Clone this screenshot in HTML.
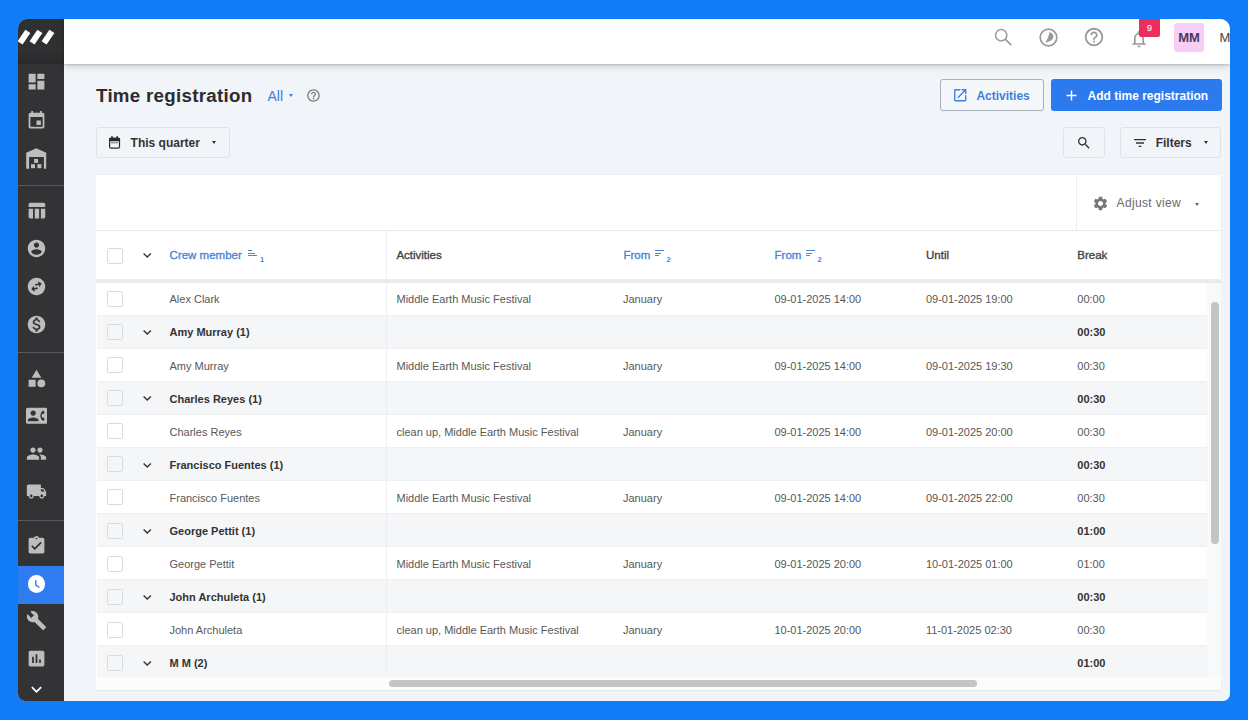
<!DOCTYPE html>
<html><head><meta charset="utf-8">
<style>
html,body{margin:0;padding:0;}
body{width:1248px;height:720px;overflow:hidden;background:#107cf6;font-family:"Liberation Sans",sans-serif;position:relative;}
.win{position:absolute;left:18px;top:18.5px;width:1212px;height:682px;border-radius:10px 10px 7px 7px;overflow:hidden;background:#f1f4f8;}
.in{position:absolute;left:-18px;top:-18.5px;width:1248px;height:720px;}
.a{position:absolute;}
.t{position:absolute;white-space:nowrap;}
</style></head><body>
<div class="win"><div class="in">
<div class="a" style="left:18px;top:18px;width:46px;height:683px;background:#333335;"></div>
<div class="a" style="left:18px;top:18px;width:46px;height:46px;background:linear-gradient(#303032 0%,#303032 70%,#29292b 100%);"></div>
<div class="a" style="left:21.30px;top:30.30px;width:5.6px;height:14px;background:#fff;transform:rotate(34deg);"></div>
<div class="a" style="left:33.10px;top:30.30px;width:5.6px;height:14px;background:#fff;transform:rotate(34deg);"></div>
<div class="a" style="left:44.90px;top:30.30px;width:5.6px;height:14px;background:#fff;transform:rotate(34deg);"></div>
<div class="a" style="left:18px;top:185px;width:46px;height:1px;background:#58585a;"></div>
<div class="a" style="left:18px;top:352px;width:46px;height:1px;background:#58585a;"></div>
<div class="a" style="left:18px;top:520px;width:46px;height:1px;background:#58585a;"></div>
<div class="a" style="left:18px;top:566px;width:46px;height:38px;background:#2f7cf0;"></div>
<svg class="a" style="left:26.00px;top:70.75px;" width="21" height="21" viewBox="0 0 24 24"><path fill="#bdbdbd" d="M3 13h8V3H3v10zm0 8h8v-6H3v6zm10 0h8V11h-8v10zm0-18v6h8V3h-8z"/></svg>
<svg class="a" style="left:26.00px;top:109.50px;" width="21" height="21" viewBox="0 0 24 24"><path fill="#bdbdbd" d="M17 12h-5v5h5v-5zM16 1v2H8V1H6v2H5c-1.11 0-1.99.9-1.99 2L3 19c0 1.1.89 2 2 2h14c1.1 0 2-.9 2-2V5c0-1.1-.9-2-2-2h-1V1h-2zm3 18H5V8h14v11z"/></svg>
<svg class="a" style="left:22px;top:142px" width="30" height="30" viewBox="22 142 30 30"><path fill="#bdbdbd" d="M26.2 168.7V152.8L36.2 148.2L46.2 152.8V168.7H43.9V157H29.1V168.7Z"/><rect fill="#bdbdbd" x="34.1" y="158.9" width="4" height="4"/><rect fill="#bdbdbd" x="31" y="164.2" width="4" height="4"/><rect fill="#bdbdbd" x="37.4" y="164.2" width="4" height="4"/></svg>
<svg class="a" style="left:26.00px;top:200.10px;" width="21" height="21" viewBox="0 0 24 24"><path fill="#bdbdbd" d="M10 10.02h5V21h-5zM17 21h3c1.1 0 2-.9 2-2v-9h-5v11zm3-18H5c-1.1 0-2 .9-2 2v3h19V5c0-1.1-.9-2-2-2zM3 19c0 1.1.9 2 2 2h3V10H3v9z"/></svg>
<svg class="a" style="left:26.00px;top:237.75px;" width="21" height="21" viewBox="0 0 24 24"><path fill="#bdbdbd" d="M12 2C6.48 2 2 6.48 2 12s4.48 10 10 10 10-4.48 10-10S17.52 2 12 2zm0 3c1.66 0 3 1.34 3 3s-1.34 3-3 3-3-1.34-3-3 1.34-3 3-3zm0 14.2c-2.5 0-4.71-1.28-6-3.22.03-1.99 4-3.08 6-3.08 1.99 0 5.97 1.09 6 3.08-1.29 1.94-3.5 3.22-6 3.22z"/></svg>
<svg class="a" style="left:26.00px;top:275.75px;transform:rotate(-12deg);" width="21" height="21" viewBox="0 0 24 24"><path fill="#bdbdbd" d="M22 12c0-5.52-4.48-10-10-10S2 6.48 2 12s4.48 10 10 10 10-4.48 10-10zm-7-5.5l3.5 3.5-3.5 3.5V11h-4V9h4V6.5zm-6 11L5.5 14 9 10.5V13h4v2H9v2.5z"/></svg>
<svg class="a" style="left:26.00px;top:313.50px;" width="21" height="21" viewBox="0 0 24 24"><path fill="#bdbdbd" d="M12 2C6.48 2 2 6.48 2 12s4.48 10 10 10 10-4.48 10-10S17.52 2 12 2zm1.41 16.09V20h-2.67v-1.93c-1.71-.36-3.16-1.46-3.27-3.4h1.96c.1 1.05.82 1.870 2.65 1.87 1.96 0 2.4-.98 2.4-1.59 0-.83-.44-1.61-2.67-2.14-2.48-.6-4.18-1.62-4.18-3.670 0-1.72 1.39-2.84 3.11-3.21V4h2.67v1.95c1.86.45 2.79 1.86 2.85 3.39H14.3c-.05-1.11-.64-1.87-2.22-1.87-1.5 0-2.4.68-2.4 1.64 0 .84.65 1.39 2.67 1.91s4.18 1.39 4.18 3.91c-.01 1.83-1.38 2.83-3.12 3.16z"/></svg>
<svg class="a" style="left:26.00px;top:367.50px;" width="21" height="21" viewBox="0 0 24 24"><path fill="#bdbdbd" d="M12 2l-5.5 9h11zM17.5 13a4.5 4.5 0 1 0 0 9a4.5 4.5 0 1 0 0-9zM3 13.5h8v8H3z"/></svg>
<svg class="a" style="left:25.75px;top:404.75px;" width="21.5" height="21.5" viewBox="0 0 24 24"><path fill="#bdbdbd" d="M22 3H2C.9 3 0 3.9 0 5v14c0 1.1.9 2 2 2h20c1.1 0 1.99-.9 1.99-2L24 5c0-1.1-.9-2-2-2zM8 6c1.66 0 3 1.34 3 3s-1.34 3-3 3-3-1.34-3-3 1.34-3 3-3zm6 12H2v-1c0-2 4-3.1 6-3.1s6 1.1 6 3.1v1zm3.85-4h1.64L21 16l-1.99 1.99c-1.31-.98-2.28-2.38-2.73-3.99-.18-.64-.28-1.31-.28-2s.1-1.36.28-2c.45-1.62 1.420-3.01 2.73-3.99L21 8l-1.51 2h-1.64c-.22.63-.35 1.3-.35 2s.13 1.37.35 2z"/></svg>
<svg class="a" style="left:26.00px;top:443.00px;" width="21" height="21" viewBox="0 0 24 24"><path fill="#bdbdbd" d="M16 11c1.66 0 2.99-1.34 2.99-3S17.66 5 16 5c-1.66 0-3 1.34-3 3s1.34 3 3 3zm-8 0c1.66 0 2.99-1.34 2.99-3S9.66 5 8 5C6.34 5 5 6.34 5 8s1.34 3 3 3zm0 2c-2.33 0-7 1.17-7 3.5V19h14v-2.5c0-2.33-4.67-3.5-7-3.5zm8 0c-.29 0-.62.02-.97.05 1.16.84 1.97 1.97 1.97 3.45V19h6v-2.5c0-2.33-4.67-3.5-7-3.5z"/></svg>
<svg class="a" style="left:26.00px;top:480.50px;" width="21" height="21" viewBox="0 0 24 24"><path fill="#bdbdbd" d="M20 8h-3V4H3c-1.1 0-2 .9-2 2v11h2c0 1.66 1.34 3 3 3s3-1.34 3-3h6c0 1.66 1.34 3 3 3s3-1.34 3-3h2v-5l-3-4zM6 18.5c-.83 0-1.5-.67-1.5-1.5s.67-1.5 1.5-1.5 1.5.67 1.5 1.5-.67 1.5-1.5 1.5zm13.5-9l1.96 2.5H17V9.5h2.5zm-1.5 9c-.83 0-1.5-.67-1.5-1.5s.67-1.5 1.5-1.5 1.5.67 1.5 1.5-.67 1.5-1.5 1.5z"/></svg>
<svg class="a" style="left:26.00px;top:534.90px;" width="21" height="21" viewBox="0 0 24 24"><path fill="#bdbdbd" d="M19 3h-4.18C14.4 1.84 13.3 1 12 1c-1.3 0-2.4.84-2.82 2H5c-1.1 0-2 .9-2 2v14c0 1.1.9 2 2 2h14c1.1 0 2-.9 2-2V5c0-1.1-.9-2-2-2zm-7 0c.55 0 1 .45 1 1s-.45 1-1 1-1-.45-1-1 .45-1 1-1zm-2 14l-4-4 1.41-1.41L10 14.17l6.59-6.59L18 9l-8 8z"/></svg>
<div class="a" style="left:27.9px;top:575.4px;width:17.2px;height:17.2px;border-radius:50%;background:#fff"></div>
<svg class="a" style="left:26.0px;top:573.5px" width="21" height="21" viewBox="0 0 24 24"><path d="M11.2 7.2v5.6l4.2 2.6" fill="none" stroke="#2f7cf0" stroke-width="1.6"/></svg>
<svg class="a" style="left:26.00px;top:610.00px;" width="21" height="21" viewBox="0 0 24 24"><path fill="#bdbdbd" d="M22.7 19l-9.1-9.1c.9-2.3.4-5-1.5-6.9-2-2-5-2.4-7.4-1.3L9 6 6 9 1.6 4.7C.4 7.1.9 10.1 2.9 12.1c1.9 1.9 4.6 2.4 6.9 1.5l9.1 9.1c.4.4 1 .4 1.4 0l2.3-2.3c.5-.4.5-1.1.1-1.4z"/></svg>
<svg class="a" style="left:26.00px;top:647.75px;" width="21" height="21" viewBox="0 0 24 24"><path fill="#bdbdbd" d="M19 3H5c-1.1 0-2 .9-2 2v14c0 1.1.9 2 2 2h14c1.1 0 2-.9 2-2V5c0-1.1-.9-2-2-2zM9 17H7v-7h2v7zm4 0h-2V7h2v10zm4 0h-2v-4h2v4z"/></svg>
<svg class="a" style="left:26.00px;top:679.00px;" width="21" height="21" viewBox="0 0 24 24"><path fill="#ffffff" d="M16.59 8.59L12 13.17 7.41 8.59 6 10l6 6 6-6z"/></svg>
<div class="a" style="left:64px;top:18px;width:1166px;height:45.5px;background:#fff;box-shadow:0 1px 2px rgba(0,0,0,0.16),0 3px 7px rgba(0,0,0,0.13);z-index:2;"></div>
<svg class="a" style="left:985px;top:20px;z-index:3" width="40" height="40" viewBox="985 20 40 40"><circle cx="1001.2" cy="35.2" r="5.6" fill="none" stroke="#9a9a9a" stroke-width="1.5"/><path d="M1005.2 39.2L1011.2 45.2" stroke="#9a9a9a" stroke-width="1.7"/></svg>
<svg class="a" style="left:1038.35px;top:26.95px;z-index:3" width="21" height="21" viewBox="0 0 21 21"><circle cx="10.5" cy="10.5" r="8.3" fill="none" stroke="#9a9a9a" stroke-width="1.75"/><path d="M11.25 5.25C16.5 6 18.5 13.5 7.55 15.6C8.8 12.8 11.3 9 11.25 5.25Z" fill="#9a9a9a"/></svg>
<svg class="a" style="left:1083.40px;top:26.40px;z-index:3;" width="22" height="22" viewBox="0 0 24 24"><path fill="#9a9a9a" d="M11 18h2v-2h-2v2zm1-16C6.48 2 2 6.48 2 12s4.48 10 10 10 10-4.48 10-10S17.52 2 12 2zm0 18c-4.41 0-8-3.59-8-8s3.59-8 8-8 8 3.59 8 8-3.59 8-8 8zm0-14c-2.21 0-4 1.79-4 4h2c0-1.1.9-2 2-2s2 .9 2 2c0 2-3 1.75-3 5h2c0-2.25 3-2.5 3-5 0-2.21-1.79-4-4-4z"/></svg>
<svg class="a" style="left:1129.30px;top:28.50px;z-index:3;" width="20" height="20" viewBox="0 0 24 24"><path fill="#9a9a9a" d="M12 22c1.1 0 2-.9 2-2h-4c0 1.1.89 2 2 2zm6-6v-5c0-3.07-1.64-5.64-4.5-6.32V4c0-.83-.67-1.5-1.5-1.5s-1.5.67-1.5 1.5v.68C7.63 5.36 6 7.92 6 11v5l-2 2v1h16v-1l-2-2zm-2 1H8v-6c0-2.48 1.51-4.5 4-4.5s4 2.02 4 4.5v6z"/></svg>
<div class="a" style="left:1139px;top:18px;width:21px;height:19px;background:#ec2e5e;border-radius:0 0 2px 2px;z-index:4;"></div>
<div class="t" style="left:1139.50px;top:21.77px;font-size:9.6px;line-height:12px;color:#fff;width:20px;text-align:center;z-index:5;">9</div>
<div class="a" style="left:1174px;top:23px;width:30px;height:29px;background:#f7cef6;border-radius:3px;z-index:3;"></div>
<div class="t" style="left:1174.00px;top:29.40px;font-size:13px;line-height:17px;color:#4d3862;font-weight:bold;width:30px;text-align:center;z-index:4;">MM</div>
<div class="t" style="left:1219.50px;top:29.30px;font-size:13px;line-height:17px;color:#444;z-index:4;">M</div>
<div class="t" style="left:96.00px;top:84.12px;font-size:18.7px;line-height:24px;color:#2c2c2c;font-weight:bold;letter-spacing:0.3px;">Time registration</div>
<div class="t" style="left:267.50px;top:86.95px;font-size:14px;line-height:18px;color:#3d7fdc;">All</div>
<div class="a" style="left:289px;top:94.3px;width:0;height:0;border-left:2.5px solid transparent;border-right:2.5px solid transparent;border-top:3px solid #3d7fdc"></div>
<svg class="a" style="left:306.10px;top:87.60px;" width="15" height="15" viewBox="0 0 24 24"><path fill="#777" d="M11 18h2v-2h-2v2zm1-16C6.48 2 2 6.48 2 12s4.48 10 10 10 10-4.48 10-10S17.52 2 12 2zm0 18c-4.41 0-8-3.59-8-8s3.59-8 8-8 8 3.59 8 8-3.59 8-8 8zm0-14c-2.21 0-4 1.79-4 4h2c0-1.1.9-2 2-2s2 .9 2 2c0 2-3 1.75-3 5h2c0-2.25 3-2.5 3-5 0-2.21-1.79-4-4-4z"/></svg>
<div class="a" style="left:940px;top:79px;width:104px;height:32px;box-sizing:border-box;border:1px solid #a8b0b8;border-radius:3px;background:#f5f8fb;"></div>
<svg class="a" style="left:952.25px;top:86.95px;" width="16.5" height="16.5" viewBox="0 0 24 24"><path fill="#3f80de" d="M19 19H5V5h7V3H5c-1.11 0-2 .9-2 2v14c0 1.1.89 2 2 2h14c1.1 0 2-.9 2-2v-7h-2v7zM14 3v2h3.59l-9.83 9.83 1.41 1.41L19 6.41V10h2V3h-7z"/></svg>
<div class="t" style="left:976.40px;top:87.84px;font-size:12px;line-height:16px;color:#3f80de;font-weight:bold;">Activities</div>
<div class="a" style="left:1051px;top:79px;width:171px;height:32px;background:#2c7af0;border-radius:3px;"></div>
<svg class="a" style="left:1062.90px;top:87.40px;" width="17" height="17" viewBox="0 0 24 24"><path fill="#fff" d="M19 13h-6v6h-2v-6H5v-2h6V5h2v6h6v2z"/></svg>
<div class="t" style="left:1087.50px;top:87.84px;font-size:12px;line-height:16px;color:#fff;font-weight:bold;">Add time registration</div>
<div class="a" style="left:96px;top:127px;width:134px;height:31px;box-sizing:border-box;border:1px solid #dfe3e8;border-radius:3px;"></div>
<svg class="a" style="left:104px;top:132px" width="22" height="20" viewBox="104 132 22 20"><rect x="109.6" y="138.4" width="9.9" height="9.8" rx="1.4" fill="none" stroke="#2b2b2b" stroke-width="1.2"/><rect x="109" y="137.8" width="11.1" height="3.4" rx="1.2" fill="#2b2b2b"/><rect x="111.2" y="136.2" width="1.6" height="2" fill="#2b2b2b"/><rect x="116.4" y="136.2" width="1.6" height="2" fill="#2b2b2b"/><rect x="111" y="142.3" width="7" height="1" fill="#777"/></svg>
<div class="t" style="left:130.60px;top:134.54px;font-size:12px;line-height:16px;color:#333;font-weight:bold;">This quarter</div>
<div class="a" style="left:212px;top:141.2px;width:0;height:0;border-left:2.6px solid transparent;border-right:2.6px solid transparent;border-top:3px solid #333"></div>
<div class="a" style="left:1063px;top:127px;width:42px;height:31px;box-sizing:border-box;border:1px solid #dfe3e8;border-radius:3px;"></div>
<svg class="a" style="left:1075.50px;top:134.50px;" width="16" height="16" viewBox="0 0 24 24"><path fill="#333" d="M15.5 14h-.79l-.28-.27C15.41 12.59 16 11.11 16 9.5 16 5.91 13.09 3 9.5 3S3 5.91 3 9.5 5.91 16 9.5 16c1.61 0 3.09-.59 4.23-1.57l.27.28v.79l5 4.99L20.49 19l-4.99-5zm-6 0C7.01 14 5 11.990 5 9.5S7.01 5 9.5 5 14 7.01 14 9.5 11.99 14 9.5 14z"/></svg>
<div class="a" style="left:1120px;top:127px;width:101px;height:31px;box-sizing:border-box;border:1px solid #dfe3e8;border-radius:3px;"></div>
<svg class="a" style="left:1132.00px;top:134.50px;" width="16" height="16" viewBox="0 0 24 24"><path fill="#333" d="M10 18h4v-2h-4v2zM3 6v2h18V6H3zm3 7h12v-2H6v2z"/></svg>
<div class="t" style="left:1155.70px;top:134.54px;font-size:12px;line-height:16px;color:#333;font-weight:bold;">Filters</div>
<div class="a" style="left:1204px;top:141.2px;width:0;height:0;border-left:2.6px solid transparent;border-right:2.6px solid transparent;border-top:3px solid #333"></div>
<div class="a" style="left:96px;top:175px;width:1125px;height:516px;background:#fff;box-shadow:0 0 1px rgba(0,0,0,0.09);"></div>
<div class="a" style="left:1076px;top:175px;width:1px;height:56px;background:#eceef1;"></div>
<div class="a" style="left:96px;top:230px;width:1125px;height:1px;background:#e8eaed;"></div>
<svg class="a" style="left:1091.70px;top:194.70px;" width="17" height="17" viewBox="0 0 24 24"><path fill="#777" d="M19.14 12.94c.04-.3.06-.61.06-.94 0-.32-.02-.64-.07-.94l2.03-1.58c.18-.14.23-.41.12-.61l-1.92-3.32c-.12-.22-.37-.29-.59-.22l-2.39.96c-.5-.38-1.03-.7-1.62-.94l-.36-2.54c-.04-.24-.24-.41-.48-.41h-3.84c-.24 0-.43.17-.47.41l-.36 2.54c-.59.24-1.13.57-1.62.94l-2.39-.96c-.22-.08-.47 0-.59.22L2.74 8.87c-.12.21-.08.47.12.61l2.03 1.58c-.05.3-.09.63-.09.94s.02.64.07.94l-2.03 1.58c-.18.14-.23.41-.12.61l1.92 3.32c.12.22.37.29.59.22l2.39-.96c.5.38 1.03.7 1.62.94l.36 2.54c.05.24.24.41.48.41h3.84c.24 0 .44-.17.47-.41l.36-2.54c.59-.24 1.13-.56 1.62-.94l2.39.96c.22.08.47 0 .59-.22l1.92-3.32c.12-.22.07-.47-.12-.61l-2.01-1.58zM12 15.6c-1.98 0-3.6-1.62-3.6-3.6s1.62-3.6 3.6-3.6 3.6 1.62 3.6 3.6-1.62 3.6-3.6 3.6z"/></svg>
<div class="t" style="left:1116.60px;top:194.64px;font-size:12px;line-height:16px;color:#6a6a6a;letter-spacing:0.35px;">Adjust view</div>
<div class="a" style="left:1195px;top:202.5px;width:0;height:0;border-left:2.7px solid transparent;border-right:2.7px solid transparent;border-top:3px solid #666"></div>
<div class="a" style="left:107px;top:248px;width:16px;height:16px;box-sizing:border-box;border:1px solid #d8dbdf;border-radius:1.5px;"></div>
<svg class="a" style="left:138.75px;top:247.45px;" width="16.5" height="16.5" viewBox="0 0 24 24"><path fill="#333" d="M16.59 8.59L12 13.17 7.41 8.59 6 10l6 6 6-6z"/></svg>
<div class="t" style="left:169.60px;top:248.32px;font-size:11.5px;line-height:15px;color:#4a86d8;-webkit-text-stroke:0.35px #4a86d8;">Crew member</div>
<div class="a" style="left:248px;top:250.0px;width:4px;height:1.0px;background:#4a86d8;"></div>
<div class="a" style="left:248px;top:252.5px;width:6.5px;height:1.0px;background:#4a86d8;"></div>
<div class="a" style="left:248px;top:255.0px;width:9px;height:1.0px;background:#4a86d8;"></div>
<div class="t" style="left:260.00px;top:254.70px;font-size:7.5px;line-height:10px;color:#4a86d8;font-weight:bold;">1</div>
<div class="a" style="left:386px;top:231px;width:1px;height:445.5px;background:#eceef1;"></div>
<div class="t" style="left:396.40px;top:248.32px;font-size:11.5px;line-height:15px;color:#444;-webkit-text-stroke:0.35px #444;">Activities</div>
<div class="t" style="left:623.50px;top:248.32px;font-size:11.5px;line-height:15px;color:#4a86d8;-webkit-text-stroke:0.35px #4a86d8;">From</div>
<div class="a" style="left:654.5px;top:250.0px;width:9.0px;height:1.0px;background:#4a86d8;"></div>
<div class="a" style="left:654.5px;top:252.5px;width:6.5px;height:1.0px;background:#4a86d8;"></div>
<div class="a" style="left:654.5px;top:255.0px;width:4.0px;height:1.0px;background:#4a86d8;"></div>
<div class="t" style="left:666.50px;top:254.70px;font-size:7.5px;line-height:10px;color:#4a86d8;font-weight:bold;">2</div>
<div class="t" style="left:774.60px;top:248.32px;font-size:11.5px;line-height:15px;color:#4a86d8;-webkit-text-stroke:0.35px #4a86d8;">From</div>
<div class="a" style="left:805.5px;top:250.0px;width:9.0px;height:1.0px;background:#4a86d8;"></div>
<div class="a" style="left:805.5px;top:252.5px;width:6.5px;height:1.0px;background:#4a86d8;"></div>
<div class="a" style="left:805.5px;top:255.0px;width:4.0px;height:1.0px;background:#4a86d8;"></div>
<div class="t" style="left:817.50px;top:254.70px;font-size:7.5px;line-height:10px;color:#4a86d8;font-weight:bold;">2</div>
<div class="t" style="left:926.00px;top:248.32px;font-size:11.5px;line-height:15px;color:#444;-webkit-text-stroke:0.35px #444;">Until</div>
<div class="t" style="left:1077.30px;top:248.32px;font-size:11.5px;line-height:15px;color:#444;-webkit-text-stroke:0.35px #444;">Break</div>
<div class="a" style="left:96px;top:278.5px;width:1125px;height:4.0px;background:linear-gradient(#eceef0,#e6e8eb);"></div>
<div class="a" style="left:97px;top:282.5px;width:1110px;height:33.079999999999984px;background:#ffffff;"></div>
<div class="a" style="left:97px;top:314.58px;width:1110px;height:1.0px;background:#eef0f2;"></div>
<div class="a" style="left:386px;top:282.5px;width:1px;height:33.079999999999984px;background:#eceef1;"></div>
<div class="a" style="left:107px;top:291px;width:16px;height:16px;box-sizing:border-box;border:1px solid #d8dbdf;border-radius:1.5px;"></div>
<div class="t" style="left:169.50px;top:292.39px;font-size:11px;line-height:14px;color:#585858;">Alex Clark</div>
<div class="t" style="left:396.50px;top:292.39px;font-size:11px;line-height:14px;color:#585858;">Middle Earth Music Festival</div>
<div class="t" style="left:623.00px;top:292.39px;font-size:11px;line-height:14px;color:#585858;">January</div>
<div class="t" style="left:774.40px;top:292.39px;font-size:11px;line-height:14px;color:#585858;">09-01-2025 14:00</div>
<div class="t" style="left:925.90px;top:292.39px;font-size:11px;line-height:14px;color:#585858;">09-01-2025 19:00</div>
<div class="t" style="left:1077.30px;top:292.39px;font-size:11px;line-height:14px;color:#585858;">00:00</div>
<div class="a" style="left:97px;top:315.58px;width:1110px;height:33.08000000000004px;background:#f5f6f8;"></div>
<div class="a" style="left:97px;top:347.66px;width:1110px;height:1.0px;background:#eef0f2;"></div>
<div class="a" style="left:386px;top:315.58px;width:1px;height:33.08000000000004px;background:#eceef1;"></div>
<div class="a" style="left:107px;top:324px;width:16px;height:16px;box-sizing:border-box;border:1px solid #d8dbdf;border-radius:1.5px;"></div>
<svg class="a" style="left:138.75px;top:324.23px;" width="16.5" height="16.5" viewBox="0 0 24 24"><path fill="#333" d="M16.59 8.59L12 13.17 7.41 8.59 6 10l6 6 6-6z"/></svg>
<div class="t" style="left:169.50px;top:325.47px;font-size:11px;line-height:14px;color:#333;font-weight:bold;">Amy Murray (1)</div>
<div class="t" style="left:1077.30px;top:325.47px;font-size:11px;line-height:14px;color:#333;font-weight:bold;">00:30</div>
<div class="a" style="left:97px;top:348.66px;width:1110px;height:33.079999999999984px;background:#ffffff;"></div>
<div class="a" style="left:97px;top:380.74px;width:1110px;height:1.0px;background:#eef0f2;"></div>
<div class="a" style="left:386px;top:348.66px;width:1px;height:33.079999999999984px;background:#eceef1;"></div>
<div class="a" style="left:107px;top:357px;width:16px;height:16px;box-sizing:border-box;border:1px solid #d8dbdf;border-radius:1.5px;"></div>
<div class="t" style="left:169.50px;top:358.55px;font-size:11px;line-height:14px;color:#585858;">Amy Murray</div>
<div class="t" style="left:396.50px;top:358.55px;font-size:11px;line-height:14px;color:#585858;">Middle Earth Music Festival</div>
<div class="t" style="left:623.00px;top:358.55px;font-size:11px;line-height:14px;color:#585858;">January</div>
<div class="t" style="left:774.40px;top:358.55px;font-size:11px;line-height:14px;color:#585858;">09-01-2025 14:00</div>
<div class="t" style="left:925.90px;top:358.55px;font-size:11px;line-height:14px;color:#585858;">09-01-2025 19:30</div>
<div class="t" style="left:1077.30px;top:358.55px;font-size:11px;line-height:14px;color:#585858;">00:30</div>
<div class="a" style="left:97px;top:381.74px;width:1110px;height:33.079999999999984px;background:#f5f6f8;"></div>
<div class="a" style="left:97px;top:413.82px;width:1110px;height:1.0px;background:#eef0f2;"></div>
<div class="a" style="left:386px;top:381.74px;width:1px;height:33.079999999999984px;background:#eceef1;"></div>
<div class="a" style="left:107px;top:390px;width:16px;height:16px;box-sizing:border-box;border:1px solid #d8dbdf;border-radius:1.5px;"></div>
<svg class="a" style="left:138.75px;top:390.39px;" width="16.5" height="16.5" viewBox="0 0 24 24"><path fill="#333" d="M16.59 8.59L12 13.17 7.41 8.59 6 10l6 6 6-6z"/></svg>
<div class="t" style="left:169.50px;top:391.63px;font-size:11px;line-height:14px;color:#333;font-weight:bold;">Charles Reyes (1)</div>
<div class="t" style="left:1077.30px;top:391.63px;font-size:11px;line-height:14px;color:#333;font-weight:bold;">00:30</div>
<div class="a" style="left:97px;top:414.82px;width:1110px;height:33.079999999999984px;background:#ffffff;"></div>
<div class="a" style="left:97px;top:446.9px;width:1110px;height:1.0px;background:#eef0f2;"></div>
<div class="a" style="left:386px;top:414.82px;width:1px;height:33.079999999999984px;background:#eceef1;"></div>
<div class="a" style="left:107px;top:423px;width:16px;height:16px;box-sizing:border-box;border:1px solid #d8dbdf;border-radius:1.5px;"></div>
<div class="t" style="left:169.50px;top:424.71px;font-size:11px;line-height:14px;color:#585858;">Charles Reyes</div>
<div class="t" style="left:396.50px;top:424.71px;font-size:11px;line-height:14px;color:#585858;">clean up, Middle Earth Music Festival</div>
<div class="t" style="left:623.00px;top:424.71px;font-size:11px;line-height:14px;color:#585858;">January</div>
<div class="t" style="left:774.40px;top:424.71px;font-size:11px;line-height:14px;color:#585858;">09-01-2025 14:00</div>
<div class="t" style="left:925.90px;top:424.71px;font-size:11px;line-height:14px;color:#585858;">09-01-2025 20:00</div>
<div class="t" style="left:1077.30px;top:424.71px;font-size:11px;line-height:14px;color:#585858;">00:30</div>
<div class="a" style="left:97px;top:447.9px;width:1110px;height:33.08000000000004px;background:#f5f6f8;"></div>
<div class="a" style="left:97px;top:479.98px;width:1110px;height:1.0px;background:#eef0f2;"></div>
<div class="a" style="left:386px;top:447.9px;width:1px;height:33.08000000000004px;background:#eceef1;"></div>
<div class="a" style="left:107px;top:456px;width:16px;height:16px;box-sizing:border-box;border:1px solid #d8dbdf;border-radius:1.5px;"></div>
<svg class="a" style="left:138.75px;top:456.55px;" width="16.5" height="16.5" viewBox="0 0 24 24"><path fill="#333" d="M16.59 8.59L12 13.17 7.41 8.59 6 10l6 6 6-6z"/></svg>
<div class="t" style="left:169.50px;top:457.79px;font-size:11px;line-height:14px;color:#333;font-weight:bold;">Francisco Fuentes (1)</div>
<div class="t" style="left:1077.30px;top:457.79px;font-size:11px;line-height:14px;color:#333;font-weight:bold;">00:30</div>
<div class="a" style="left:97px;top:480.98px;width:1110px;height:33.07999999999993px;background:#ffffff;"></div>
<div class="a" style="left:97px;top:513.06px;width:1110px;height:1.0px;background:#eef0f2;"></div>
<div class="a" style="left:386px;top:480.98px;width:1px;height:33.07999999999993px;background:#eceef1;"></div>
<div class="a" style="left:107px;top:489px;width:16px;height:16px;box-sizing:border-box;border:1px solid #d8dbdf;border-radius:1.5px;"></div>
<div class="t" style="left:169.50px;top:490.87px;font-size:11px;line-height:14px;color:#585858;">Francisco Fuentes</div>
<div class="t" style="left:396.50px;top:490.87px;font-size:11px;line-height:14px;color:#585858;">Middle Earth Music Festival</div>
<div class="t" style="left:623.00px;top:490.87px;font-size:11px;line-height:14px;color:#585858;">January</div>
<div class="t" style="left:774.40px;top:490.87px;font-size:11px;line-height:14px;color:#585858;">09-01-2025 14:00</div>
<div class="t" style="left:925.90px;top:490.87px;font-size:11px;line-height:14px;color:#585858;">09-01-2025 22:00</div>
<div class="t" style="left:1077.30px;top:490.87px;font-size:11px;line-height:14px;color:#585858;">00:30</div>
<div class="a" style="left:97px;top:514.06px;width:1110px;height:33.08000000000004px;background:#f5f6f8;"></div>
<div class="a" style="left:97px;top:546.14px;width:1110px;height:1.0px;background:#eef0f2;"></div>
<div class="a" style="left:386px;top:514.06px;width:1px;height:33.08000000000004px;background:#eceef1;"></div>
<div class="a" style="left:107px;top:523px;width:16px;height:16px;box-sizing:border-box;border:1px solid #d8dbdf;border-radius:1.5px;"></div>
<svg class="a" style="left:138.75px;top:522.71px;" width="16.5" height="16.5" viewBox="0 0 24 24"><path fill="#333" d="M16.59 8.59L12 13.17 7.41 8.59 6 10l6 6 6-6z"/></svg>
<div class="t" style="left:169.50px;top:523.95px;font-size:11px;line-height:14px;color:#333;font-weight:bold;">George Pettit (1)</div>
<div class="t" style="left:1077.30px;top:523.95px;font-size:11px;line-height:14px;color:#333;font-weight:bold;">01:00</div>
<div class="a" style="left:97px;top:547.14px;width:1110px;height:33.08000000000004px;background:#ffffff;"></div>
<div class="a" style="left:97px;top:579.22px;width:1110px;height:1.0px;background:#eef0f2;"></div>
<div class="a" style="left:386px;top:547.14px;width:1px;height:33.08000000000004px;background:#eceef1;"></div>
<div class="a" style="left:107px;top:556px;width:16px;height:16px;box-sizing:border-box;border:1px solid #d8dbdf;border-radius:1.5px;"></div>
<div class="t" style="left:169.50px;top:557.03px;font-size:11px;line-height:14px;color:#585858;">George Pettit</div>
<div class="t" style="left:396.50px;top:557.03px;font-size:11px;line-height:14px;color:#585858;">Middle Earth Music Festival</div>
<div class="t" style="left:623.00px;top:557.03px;font-size:11px;line-height:14px;color:#585858;">January</div>
<div class="t" style="left:774.40px;top:557.03px;font-size:11px;line-height:14px;color:#585858;">09-01-2025 20:00</div>
<div class="t" style="left:925.90px;top:557.03px;font-size:11px;line-height:14px;color:#585858;">10-01-2025 01:00</div>
<div class="t" style="left:1077.30px;top:557.03px;font-size:11px;line-height:14px;color:#585858;">01:00</div>
<div class="a" style="left:97px;top:580.22px;width:1110px;height:33.07999999999993px;background:#f5f6f8;"></div>
<div class="a" style="left:97px;top:612.3px;width:1110px;height:1.0px;background:#eef0f2;"></div>
<div class="a" style="left:386px;top:580.22px;width:1px;height:33.07999999999993px;background:#eceef1;"></div>
<div class="a" style="left:107px;top:589px;width:16px;height:16px;box-sizing:border-box;border:1px solid #d8dbdf;border-radius:1.5px;"></div>
<svg class="a" style="left:138.75px;top:588.87px;" width="16.5" height="16.5" viewBox="0 0 24 24"><path fill="#333" d="M16.59 8.59L12 13.17 7.41 8.59 6 10l6 6 6-6z"/></svg>
<div class="t" style="left:169.50px;top:590.11px;font-size:11px;line-height:14px;color:#333;font-weight:bold;">John Archuleta (1)</div>
<div class="t" style="left:1077.30px;top:590.11px;font-size:11px;line-height:14px;color:#333;font-weight:bold;">00:30</div>
<div class="a" style="left:97px;top:613.3px;width:1110px;height:33.08000000000004px;background:#ffffff;"></div>
<div class="a" style="left:97px;top:645.38px;width:1110px;height:1.0px;background:#eef0f2;"></div>
<div class="a" style="left:386px;top:613.3px;width:1px;height:33.08000000000004px;background:#eceef1;"></div>
<div class="a" style="left:107px;top:622px;width:16px;height:16px;box-sizing:border-box;border:1px solid #d8dbdf;border-radius:1.5px;"></div>
<div class="t" style="left:169.50px;top:623.19px;font-size:11px;line-height:14px;color:#585858;">John Archuleta</div>
<div class="t" style="left:396.50px;top:623.19px;font-size:11px;line-height:14px;color:#585858;">clean up, Middle Earth Music Festival</div>
<div class="t" style="left:623.00px;top:623.19px;font-size:11px;line-height:14px;color:#585858;">January</div>
<div class="t" style="left:774.40px;top:623.19px;font-size:11px;line-height:14px;color:#585858;">10-01-2025 20:00</div>
<div class="t" style="left:925.90px;top:623.19px;font-size:11px;line-height:14px;color:#585858;">11-01-2025 02:30</div>
<div class="t" style="left:1077.30px;top:623.19px;font-size:11px;line-height:14px;color:#585858;">00:30</div>
<div class="a" style="left:97px;top:646.38px;width:1110px;height:33.08000000000004px;background:#f5f6f8;"></div>
<div class="a" style="left:97px;top:678.46px;width:1110px;height:1.0px;background:#eef0f2;"></div>
<div class="a" style="left:386px;top:646.38px;width:1px;height:33.08000000000004px;background:#eceef1;"></div>
<div class="a" style="left:107px;top:655px;width:16px;height:16px;box-sizing:border-box;border:1px solid #d8dbdf;border-radius:1.5px;"></div>
<svg class="a" style="left:138.75px;top:655.03px;" width="16.5" height="16.5" viewBox="0 0 24 24"><path fill="#333" d="M16.59 8.59L12 13.17 7.41 8.59 6 10l6 6 6-6z"/></svg>
<div class="t" style="left:169.50px;top:656.27px;font-size:11px;line-height:14px;color:#333;font-weight:bold;">M M (2)</div>
<div class="t" style="left:1077.30px;top:656.27px;font-size:11px;line-height:14px;color:#333;font-weight:bold;">01:00</div>
<div class="a" style="left:1207px;top:282.5px;width:14px;height:394.0px;background:#f8f9fa;"></div>
<div class="a" style="left:1211px;top:302px;width:8px;height:242px;background:#c4c4c4;border-radius:4px;"></div>
<div class="a" style="left:97px;top:676.5px;width:1124px;height:13.5px;background:#fcfcfd;"></div>
<div class="a" style="left:389px;top:679.5px;width:588px;height:7.0px;background:#c4c4c4;border-radius:4px;"></div>
<div class="a" style="left:96px;top:690px;width:1125px;height:1px;background:#e6e8eb;"></div>
</div></div>
</body></html>
